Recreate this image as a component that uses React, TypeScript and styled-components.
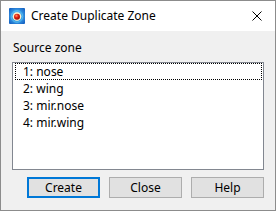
import React from 'react'
import styled, { createGlobalStyle } from 'styled-components'

const GlobalStyle = createGlobalStyle`
  html, body {
    margin: 0;
    padding: 0;
    background: #ffffff;
  }
  * {
    box-sizing: border-box;
  }
`

const Window = styled.div`
  width: 276px;
  height: 211px;
  border: 1px solid #8c8c8c;
  background: #f0f0f0;
  display: flex;
  flex-direction: column;
  font-family: 'Noto Sans', 'Open Sans', sans-serif;
  font-size: 12px;
  color: #000;
`

const TitleBar = styled.div`
  height: 30px;
  background: #ffffff;
  display: flex;
  align-items: center;
  padding-left: 8px;
  flex-shrink: 0;
`

const TitleText = styled.span`
  margin-left: 6px;
  font-size: 12px;
  line-height: 16px;
  flex: 1;
`

const CloseBox = styled.div`
  width: 46px;
  height: 30px;
  display: flex;
  align-items: center;
  justify-content: center;
  margin-right: -5px;
`

const Body = styled.div`
  flex: 1;
  display: flex;
  flex-direction: column;
  padding: 9px 11px 0 11px;
`

const Label = styled.div`
  line-height: 16px;
  height: 16px;
  padding-left: 1px;
`

const ListBox = styled.div`
  margin-top: 6px;
  width: 252px;
  height: 108px;
  border: 1px solid #828790;
  background: #ffffff;
  padding: 0 1px 0 2px;
`

const Item = styled.div<{ $focused?: boolean }>`
  height: 17px;
  line-height: 15px;
  padding-left: 7px;
  border: 1px dotted ${(p) => (p.$focused ? '#000' : 'transparent')};
`

const ButtonRow = styled.div`
  margin-top: 7px;
  width: 252px;
  display: flex;
  justify-content: flex-end;
  gap: 9px;
`

const Button = styled.button<{ $default?: boolean }>`
  width: 73px;
  height: 21px;
  padding: 0;
  font-family: inherit;
  font-size: 12px;
  color: #000;
  background: #e1e1e1;
  border: ${(p) => (p.$default ? '2px solid #0078d7' : '1px solid #adadad')};
  line-height: 16px;
`

const AppIcon = () => (
  <svg width="16" height="16" viewBox="0 0 16 16">
    <defs>
      <radialGradient id="bg" cx="50%" cy="50%" r="72%">
        <stop offset="0%" stopColor="#bfe6ff" />
        <stop offset="45%" stopColor="#3c9ce8" />
        <stop offset="100%" stopColor="#0a52b8" />
      </radialGradient>
      <radialGradient id="ball" cx="40%" cy="35%" r="60%">
        <stop offset="0%" stopColor="#ff9a70" />
        <stop offset="50%" stopColor="#e8200c" />
        <stop offset="100%" stopColor="#a01008" />
      </radialGradient>
    </defs>
    <rect x="0" y="0" width="16" height="16" rx="1" fill="url(#bg)" />
    <circle cx="8" cy="8.5" r="5.8" fill="none" stroke="#5fd0f0" strokeWidth="0.7" />
    <circle cx="8" cy="8.5" r="4.3" fill="#fff3c8" />
    <circle cx="8" cy="8.7" r="3" fill="url(#ball)" />
  </svg>
)

const CloseIcon = () => (
  <svg width="10" height="10" viewBox="0 0 10 10">
    <path d="M0.5 0.5 L9.5 9.5 M9.5 0.5 L0.5 9.5" stroke="#000" strokeWidth="1" />
  </svg>
)

const zones = ['1: nose', '2: wing', '3: mir.nose', '4: mir.wing']

export default function App() {
  return (
    <>
      <GlobalStyle />
      <Window>
        <TitleBar>
          <AppIcon />
          <TitleText>Create Duplicate Zone</TitleText>
          <CloseBox>
            <CloseIcon />
          </CloseBox>
        </TitleBar>
        <Body>
          <Label>Source zone</Label>
          <ListBox>
            {zones.map((z, i) => (
              <Item key={z} $focused={i === 0}>
                {z}
              </Item>
            ))}
          </ListBox>
          <ButtonRow>
            <Button $default>Create</Button>
            <Button>Close</Button>
            <Button>Help</Button>
          </ButtonRow>
        </Body>
      </Window>
    </>
  )
}
